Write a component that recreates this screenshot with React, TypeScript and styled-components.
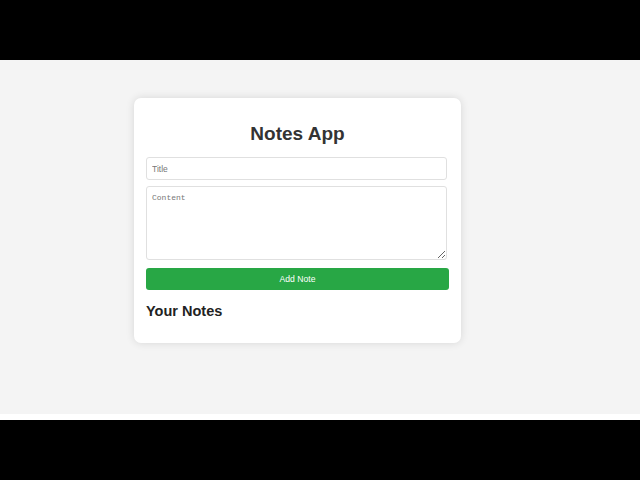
import React, { useState } from "react";
import styled, { createGlobalStyle } from "styled-components";

const GlobalStyle = createGlobalStyle`
  html, body { margin: 0; padding: 0; background: #000; }
  body { font-family: "Liberation Sans", Arial, sans-serif; }
  * { box-sizing: border-box; }
`;

const Screen = styled.div`
  width: 640px;
  height: 480px;
  display: flex;
  flex-direction: column;
  background: #000;
`;

const Bar = styled.div<{ $h: number; $bg: string }>`
  height: ${(p) => p.$h}px;
  flex: none;
  background: ${(p) => p.$bg};
`;

const Page = styled.main`
  flex: none;
  height: 354px;
  background: #f4f4f4;
  padding: 38px 0 0 134px;
`;

const Card = styled.section`
  width: 327px;
  background: #fff;
  border-radius: 7px;
  box-shadow: 0 0 9px rgba(0, 0, 0, 0.12);
  padding: 12px;
  display: flex;
  flex-direction: column;
`;

const Heading = styled.h1`
  margin: 13px 0 12px;
  font-size: 19px;
  line-height: 22px;
  font-weight: bold;
  text-align: center;
  color: #333;
`;

const TitleInput = styled.input`
  width: 301px;
  height: 23px;
  margin: 0 0 6px;
  padding: 0 5px;
  border: 1px solid #e0e0e0;
  border-radius: 3px;
  font-family: "Liberation Sans", Arial, sans-serif;
  font-size: 8.5px;
  color: #333;
  outline: none;
  &::placeholder { color: #777; }
`;

const ContentArea = styled.textarea`
  display: block;
  width: 301px;
  height: 74px;
  margin: 0 0 8px;
  padding: 6px 5px;
  border: 1px solid #e0e0e0;
  border-radius: 3px;
  font-family: "Liberation Mono", "DejaVu Sans Mono", monospace;
  font-size: 8px;
  color: #333;
  outline: none;
  resize: vertical;
  &::placeholder { color: #777; }
`;

const AddButton = styled.button`
  width: 303px;
  height: 22px;
  border: none;
  border-radius: 3px;
  background: #28a745;
  color: #fff;
  font-family: "Liberation Sans", Arial, sans-serif;
  font-size: 8.6px;
  cursor: pointer;
  padding: 0;
`;

const SubHeading = styled.h2`
  margin: 13px 0 11px;
  font-size: 14.5px;
  line-height: 17px;
  font-weight: bold;
  color: #222;
`;

export default function App() {
  const [title, setTitle] = useState("");
  const [content, setContent] = useState("");
  return (
    <>
      <GlobalStyle />
      <Screen>
        <Bar $h={60} $bg="#000" />
        <Page>
          <Card>
            <Heading>Notes App</Heading>
            <TitleInput
              placeholder="Title"
              value={title}
              onChange={(e) => setTitle(e.target.value)}
            />
            <ContentArea
              placeholder="Content"
              value={content}
              onChange={(e) => setContent(e.target.value)}
            />
            <AddButton>Add Note</AddButton>
            <SubHeading>Your Notes</SubHeading>
          </Card>
        </Page>
        <Bar $h={6} $bg="#fff" />
        <Bar $h={60} $bg="#000" />
      </Screen>
    </>
  );
}
